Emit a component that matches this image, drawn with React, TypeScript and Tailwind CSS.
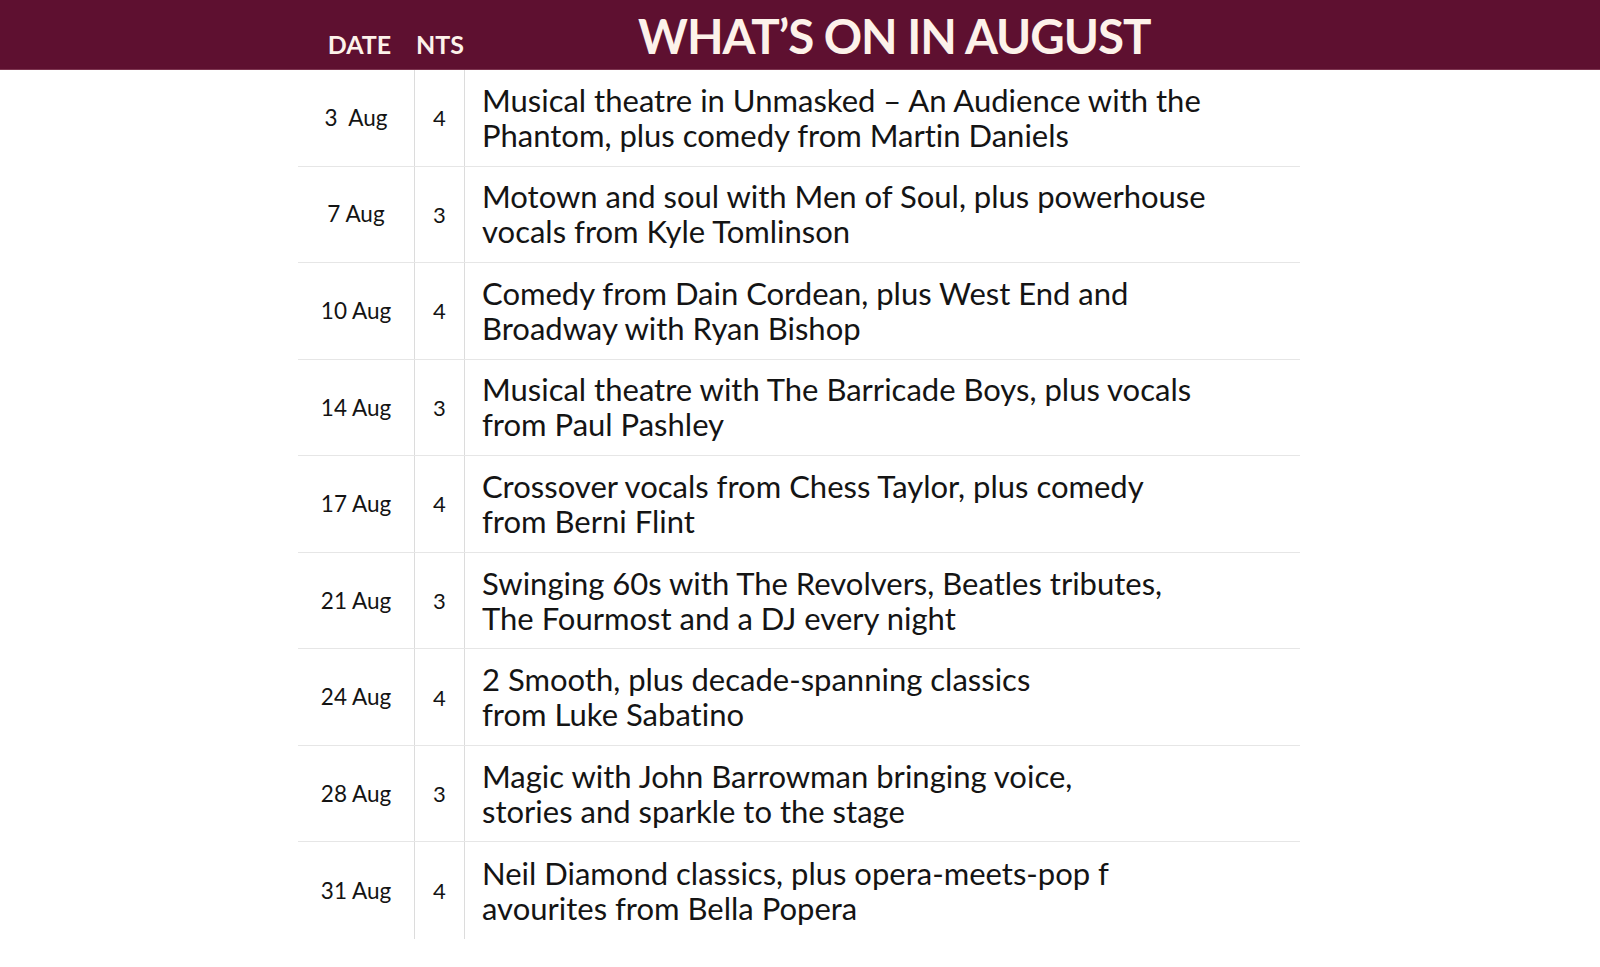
import React from "react";

const rows = [
  { date: "3\u00a0 Aug", nts: "4", l1: "Musical theatre in Unmasked \u2013 An Audience with the", l2: "Phantom, plus comedy from Martin Daniels" },
  { date: "7 Aug", nts: "3", l1: "Motown and soul with Men of Soul, plus powerhouse", l2: "vocals from Kyle Tomlinson" },
  { date: "10 Aug", nts: "4", l1: "Comedy from Dain Cordean, plus West End and", l2: "Broadway with Ryan Bishop" },
  { date: "14 Aug", nts: "3", l1: "Musical theatre with The Barricade Boys, plus vocals", l2: "from Paul Pashley" },
  { date: "17 Aug", nts: "4", l1: "Crossover vocals from Chess Taylor, plus comedy", l2: "from Berni Flint" },
  { date: "21 Aug", nts: "3", l1: "Swinging 60s with The Revolvers, Beatles tributes,", l2: "The Fourmost and a DJ every night" },
  { date: "24 Aug", nts: "4", l1: "2 Smooth, plus decade-spanning classics", l2: "from Luke Sabatino" },
  { date: "28 Aug", nts: "3", l1: "Magic with John Barrowman bringing voice,", l2: "stories and sparkle to the stage" },
  { date: "31 Aug", nts: "4", l1: "Neil Diamond classics, plus opera-meets-pop f", l2: "avourites from Bella Popera" },
];

export default function App() {
  return (
    <div className="w-[1600px] h-[967px] bg-white overflow-hidden [font-variant-ligatures:none]" style={{ fontFamily: "Lato, 'Open Sans', sans-serif" }}>
      <div className="h-[70px] bg-[#5e1030] border-b border-[#7d3550] flex items-end text-[#fdf2ea]">
        <div className="w-[298px]" />
        <div className="w-[117px] flex justify-center pl-[6px] pb-[12px] text-[25px] font-bold leading-none">DATE</div>
        <div className="w-[50px] flex justify-center pb-[12px] text-[25px] font-bold leading-none">NTS</div>
        <div className="pl-[173px] pb-[10px] text-[47.5px] font-bold leading-none tracking-[-1px]">WHAT’S ON IN AUGUST</div>
      </div>
      <div className="ml-[298px] w-[1002px] h-[869px] grid grid-rows-9 text-[#141414]">
        {rows.map((r, i) => (
          <div key={i} className={"flex " + (i < rows.length - 1 ? "border-b border-[#e6e6e6]" : "")}>
            <div className="w-[117px] border-r border-[#dcdcdc] flex items-center justify-center text-[22.5px]">{r.date}</div>
            <div className="w-[50px] border-r border-[#dcdcdc] flex items-center justify-center text-[22px]">{r.nts}</div>
            <div className="flex-1 flex flex-col justify-center pl-[17px] text-[31px] leading-[35px]">
              <div>{r.l1}</div>
              <div>{r.l2}</div>
            </div>
          </div>
        ))}
      </div>
    </div>
  );
}
